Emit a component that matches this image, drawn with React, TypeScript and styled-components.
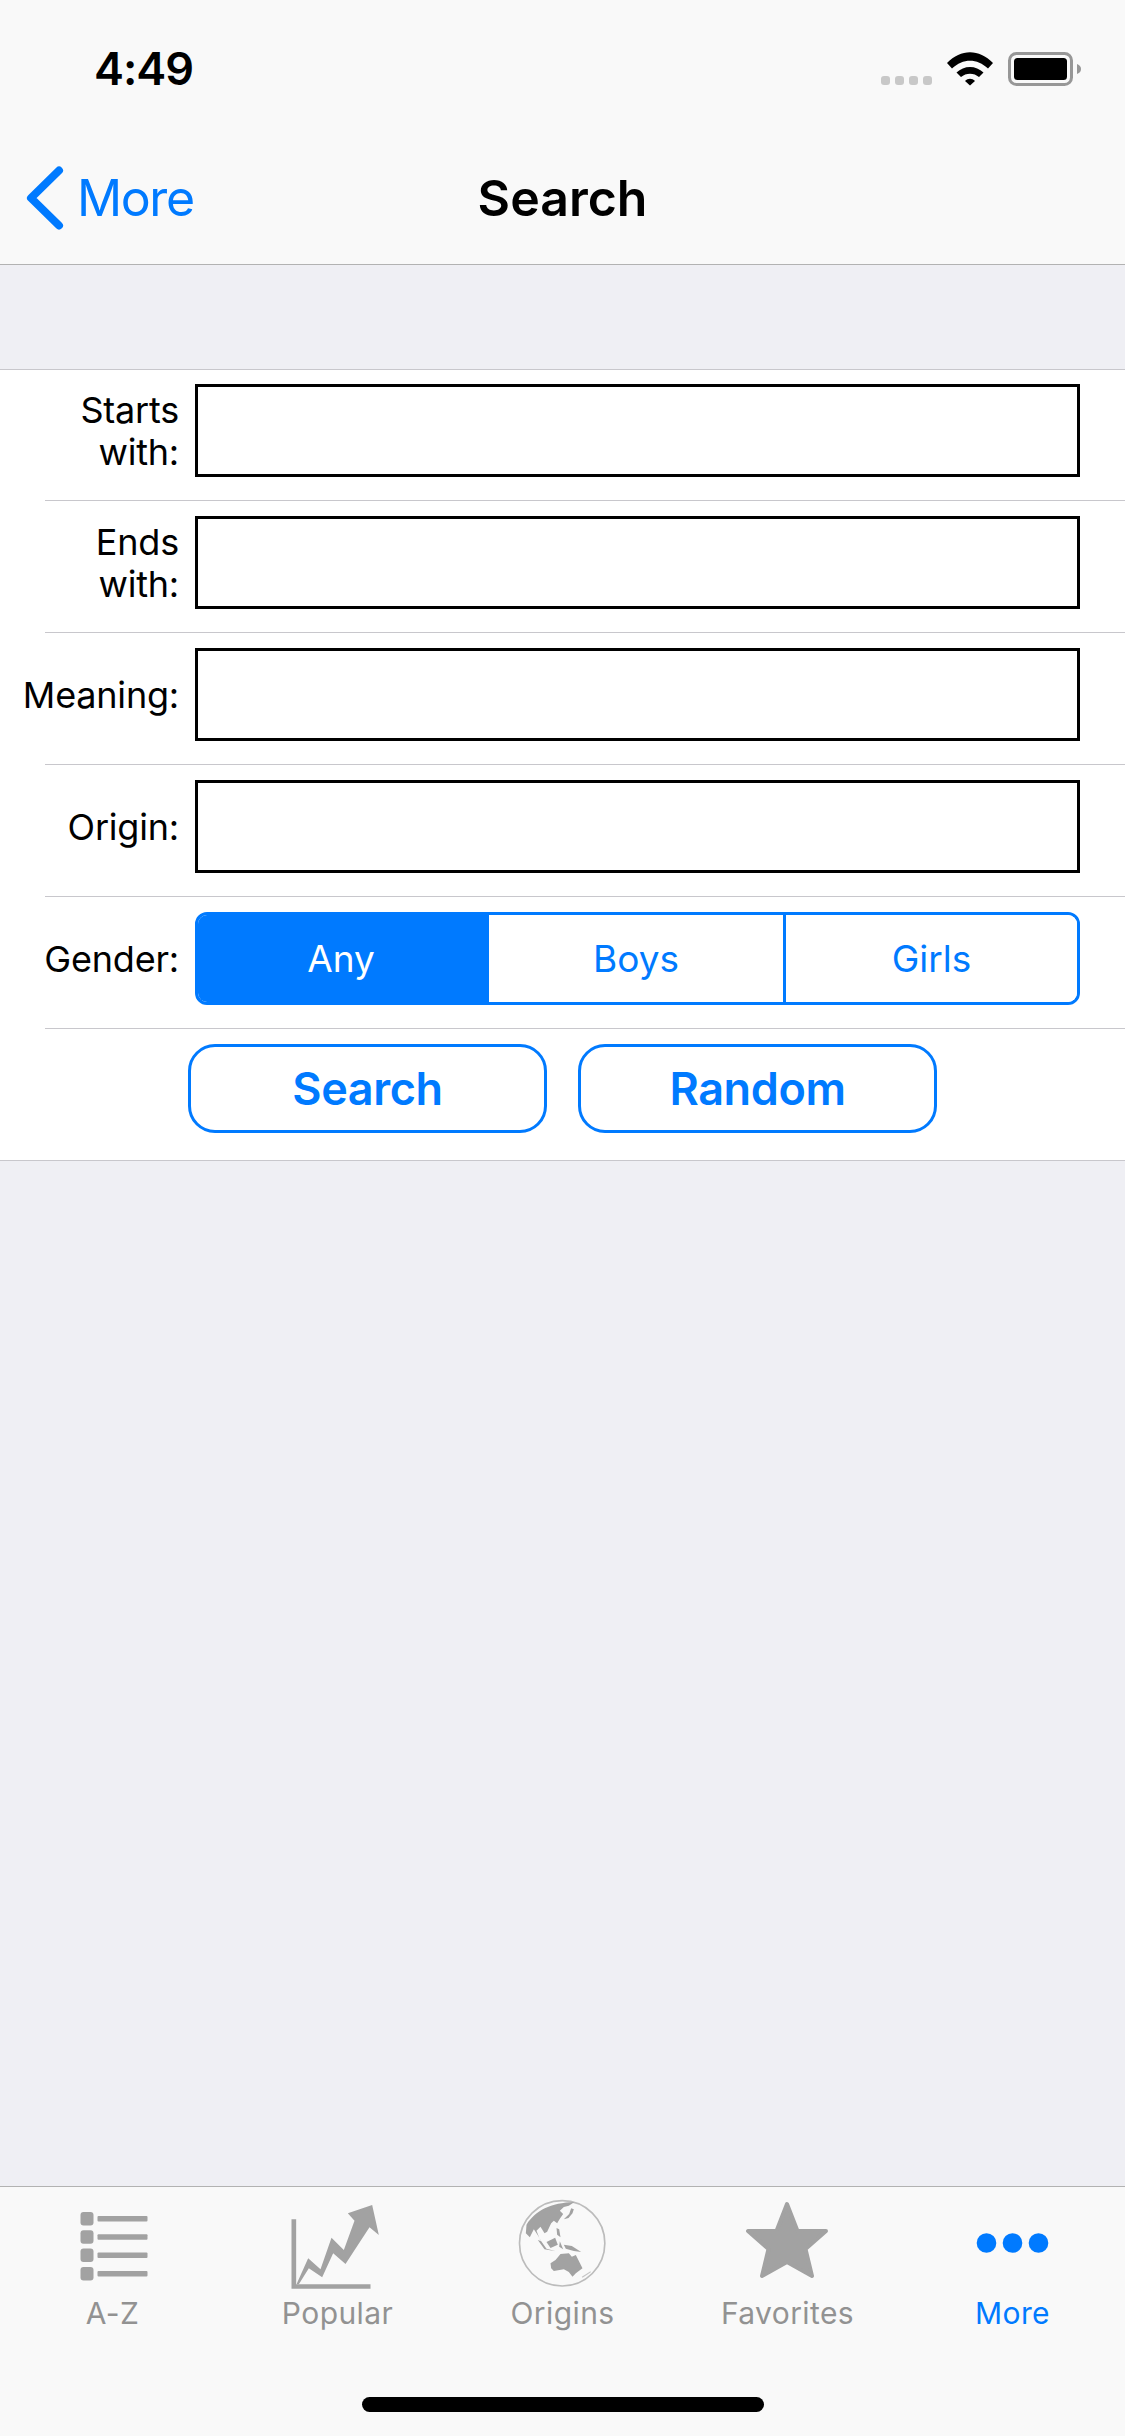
import React from 'react';
import styled, { createGlobalStyle } from 'styled-components';

const blue = '#007aff';
const tabGray = '#929292';
const iconGray = '#a2a2a2';

const GlobalStyle = createGlobalStyle`
  html, body {
    margin: 0;
    padding: 0;
    background: #efeff4;
  }

  * {
    box-sizing: border-box;
  }
`;

const WifiIcon = () => (
  <svg width="46" height="34" viewBox="0 0 46 34" fill="#000">
    <path d="M0 11C14-3.500 32-3.500 46 11L41 16.500C30 6 16 6 5 16.500Z" />
    <path d="M9.500 20.500C17 13 29 13 36.500 20.500L32 25C27 20.500 19 20.500 14 25Z" />
    <path d="M18 29C21 26 25 26 28 29L23 33.500Z" />
  </svg>
);

const BatteryIcon = () => (
  <svg width="74" height="34" viewBox="0 0 74 34">
    <rect x="1.500" y="1.500" width="62" height="31" rx="7" fill="none" stroke="#979797" strokeWidth="3" />
    <rect x="6" y="6" width="53" height="22" rx="3.500" fill="#000" />
    <path d="M69 12C72 13 73 15 73 17C73 19 72 21 69 22Z" fill="#979797" />
  </svg>
);

const BackChevron = () => (
  <svg width="38" height="64" viewBox="0 0 38 64" fill="none">
    <path d="M33 4.500L5 32L33 59.500" stroke={blue} strokeWidth="8" strokeLinecap="round" strokeLinejoin="round" />
  </svg>
);

// tab icons all sit in a 100x100 canvas, the viewBox places the drawing inside it
const ListIcon = () => (
  <svg width="100" height="100" viewBox="-17.500 -18 100 100" fill={iconGray} style={{ filter: 'blur(0.7px)' }}>
    {[0, 18.300, 36.600, 54.900].map((y) => (
      <g key={y}>
        <rect x="0" y={y} width="13" height="13.500" rx="3" />
        <rect x="17" y={y + 4} width="50" height="5.500" rx="1" />
      </g>
    ))}
  </svg>
);

const ChartIcon = () => (
  <svg width="100" height="100" viewBox="52.500 12 300 300" fill={iconGray} style={{ filter: 'blur(0.4px)' }}>
    <path d="M63 88H77V283H300V296H63Z" />
    <path d="M78 283L113 205L150 238L183 143L220 180L252 92L232 70L305 45L325 135L297 112L225 222L188 190L155 262L115 235L85 283Z" />
  </svg>
);

const GlobeIcon = () => (
  <svg width="100" height="100" viewBox="37.500 12 300 300" style={{ filter: 'blur(0.4px)' }}>
    <circle cx="185" cy="160" r="128" fill="none" stroke="#bcbcbc" strokeWidth="5" />
    <g fill={iconGray}>
      <path d="M78 104C105 62 150 38 222 36L205 47L190 51L178 62L188 72L178 86L170 100L160 92L152 100L140 125L132 130L120 110L108 122L118 148L128 165L112 136L100 118L88 142L76 130Z" />
      <path d="M190 88L206 72L212 55L220 58L216 70L204 84Z" />
      <path d="M168 114L176 118L180 142L170 134Z" />
      <path d="M138 156L164 143L172 164L150 174Z" />
      <path d="M112 150L122 154L138 176L166 184L132 178Z" />
      <path d="M178 154L188 178L176 170Z" />
      <path d="M190 164L214 168L242 186L220 183L196 176Z" />
      <path d="M150 220L165 210L180 192L205 190L214 200L226 195L246 235L226 250L216 260L205 246L190 238L160 243L152 235Z" />
      <path d="M244 260L270 244L271 247L246 263Z" opacity="0.6" />
    </g>
  </svg>
);

const StarIcon = () => (
  <svg width="100" height="100" viewBox="-8.500 -8 100 100" fill={iconGray} stroke={iconGray} strokeWidth="4" strokeLinejoin="round">
    <path d="M40.500 2L51 29L79.500 29L59 47L65.500 74L40.500 60L15.500 74L22 47L1.500 29L30 29Z" />
  </svg>
);

const DotsIcon = () => (
  <svg width="100" height="100" viewBox="-13.500 -39 100 100" fill={blue}>
    <circle cx="10" cy="10" r="9.800" />
    <circle cx="36" cy="10" r="9.800" />
    <circle cx="62" cy="10" r="9.800" />
  </svg>
);

const fields = [
  { id: 'starts', label: 'Starts with:' },
  { id: 'ends', label: 'Ends with:' },
  { id: 'meaning', label: 'Meaning:' },
  { id: 'origin', label: 'Origin:' },
];

const genders = ['Any', 'Boys', 'Girls'];

const tabs = [
  { label: 'A-Z', icon: <ListIcon /> },
  { label: 'Popular', icon: <ChartIcon /> },
  { label: 'Origins', icon: <GlobeIcon /> },
  { label: 'Favorites', icon: <StarIcon /> },
  { label: 'More', icon: <DotsIcon />, active: true },
];

export default function App() {
  return (
    <Screen>
      <GlobalStyle />
      <Header>
        <StatusBar>
          <Clock>4:49</Clock>
          <StatusIcons>
            <SignalDots>
              <SignalDot />
              <SignalDot />
              <SignalDot />
              <SignalDot />
            </SignalDots>
            <WifiIcon />
            <BatteryIcon />
          </StatusIcons>
        </StatusBar>
        <NavBar>
          <BackButton>
            <BackChevron />
            More
          </BackButton>
          <NavTitle>Search</NavTitle>
        </NavBar>
      </Header>

      <Content>
        <Form>
          {fields.map((field) => (
            <Row key={field.id}>
              <Label htmlFor={field.id}>{field.label}</Label>
              <TextField id={field.id} type="text" />
            </Row>
          ))}
          <Row>
            <Label>Gender:</Label>
            <Segments>
              {genders.map((gender, i) => (
                <Segment key={gender} selected={i === 0}>
                  {gender}
                </Segment>
              ))}
            </Segments>
          </Row>
          <ActionRow>
            <ActionButton>Search</ActionButton>
            <ActionButton>Random</ActionButton>
          </ActionRow>
        </Form>
      </Content>

      <TabBar>
        <Tabs>
          {tabs.map((tab) => (
            <Tab key={tab.label} active={tab.active}>
              <TabIcon>{tab.icon}</TabIcon>
              {tab.label}
            </Tab>
          ))}
        </Tabs>
        <HomeIndicator />
      </TabBar>
    </Screen>
  );
}

const Screen = styled.div`
  display: flex;
  flex-direction: column;
  width: 1125px;
  height: 2436px;
  overflow: hidden;
  background: #efeff4;
  font-family: Inter, 'Liberation Sans', sans-serif;
`;

const Header = styled.header`
  flex: none;
  height: 265px;
  background: #f9f9f9;
  border-bottom: 1px solid #b2b2b2;
`;

const StatusBar = styled.div`
  display: flex;
  align-items: flex-start;
  justify-content: space-between;
  height: 132px;
  padding: 52px 43px 0 94px;
`;

const Clock = styled.span`
  font-size: 45px;
  line-height: 34px;
  font-weight: 600;
  letter-spacing: -1px;
  color: #000;
`;

const StatusIcons = styled.div`
  display: flex;
  align-items: flex-start;
  gap: 15px;
`;

const SignalDots = styled.div`
  display: flex;
  gap: 5px;
  margin-top: 24px;
`;

const SignalDot = styled.span`
  width: 9px;
  height: 9px;
  border-radius: 3px;
  background: #c8c8c8;
`;

const NavBar = styled.nav`
  position: relative;
  display: flex;
  align-items: center;
  justify-content: center;
  height: 132px;
`;

const BackButton = styled.button`
  position: absolute;
  left: 26px;
  top: 0;
  bottom: 0;
  display: flex;
  align-items: center;
  gap: 13px;
  padding: 0;
  border: 0;
  background: none;
  font: 400 50px Inter, 'Liberation Sans', sans-serif;
  letter-spacing: -1.4px;
  color: ${blue};
`;

const NavTitle = styled.h1`
  margin: 0;
  font-size: 50px;
  font-weight: 600;
  color: #000;
`;

const Content = styled.main`
  flex: 1;
  padding-top: 104px;
`;

const Form = styled.div`
  background: #fff;
  border-top: 1px solid #c8c7cc;
  border-bottom: 1px solid #c8c7cc;
`;

const Row = styled.div`
  position: relative;
  display: grid;
  grid-template-columns: 159px 885px;
  grid-template-rows: 93px;
  column-gap: 16px;
  align-items: center;
  height: 132px;
  padding: 15px 0 0 20px;

  &:first-child {
    height: 131px;
    padding-top: 14px;
  }

  &::after {
    content: '';
    position: absolute;
    left: 45px;
    right: 0;
    bottom: 0;
    height: 1px;
    background: #c8c7cc;
  }
`;

const Label = styled.label`
  font-size: 36px;
  line-height: 42px;
  letter-spacing: -0.2px;
  text-align: right;
  color: #000;
`;

const TextField = styled.input`
  width: 885px;
  height: 93px;
  padding: 0 12px;
  border: 3px solid #000;
  border-radius: 0;
  outline: none;
  background: #fff;
  font: 400 36px Inter, 'Liberation Sans', sans-serif;
`;

const Segments = styled.div`
  display: grid;
  grid-template-columns: 291px 294px 1fr;
  height: 93px;
  overflow: hidden;
  border: 3px solid ${blue};
  border-radius: 12px;
`;

const Segment = styled.button<{ selected?: boolean }>`
  padding: 0 ${(p) => (p.selected ? '5px' : '0')} 0 0;
  border: 0;
  background: ${(p) => (p.selected ? blue : '#fff')};
  font: 400 37px Inter, 'Liberation Sans', sans-serif;
  color: ${(p) => (p.selected ? '#fff' : blue)};

  &:last-child {
    border-left: 3px solid ${blue};
  }
`;

const ActionRow = styled.div`
  display: flex;
  gap: 31px;
  height: 131px;
  padding: 15px 0 0 188px;
`;

const ActionButton = styled.button`
  width: 359px;
  height: 89px;
  padding: 0;
  border: 3px solid ${blue};
  border-radius: 27px;
  background: #fff;
  font: 600 45px Inter, 'Liberation Sans', sans-serif;
  letter-spacing: -0.4px;
  color: ${blue};
`;

const TabBar = styled.footer`
  flex: none;
  display: flex;
  flex-direction: column;
  height: 250px;
  background: #f9f9f9;
  border-top: 1px solid #b2b2b2;
`;

const Tabs = styled.div`
  display: grid;
  grid-template-columns: repeat(5, 225px);
  height: 147px;
`;

const Tab = styled.div<{ active?: boolean }>`
  display: flex;
  flex-direction: column;
  align-items: center;
  font-size: 30px;
  line-height: 36px;
  letter-spacing: 0.4px;
  color: ${(p) => (p.active ? blue : tabGray)};
`;

const TabIcon = styled.div`
  display: flex;
  justify-content: center;
  height: 108px;
  padding-top: 7px;

  svg {
    display: block;
  }
`;

const HomeIndicator = styled.div`
  width: 402px;
  height: 15px;
  margin: 63px auto 0;
  border-radius: 8px;
  background: #000;
`;
